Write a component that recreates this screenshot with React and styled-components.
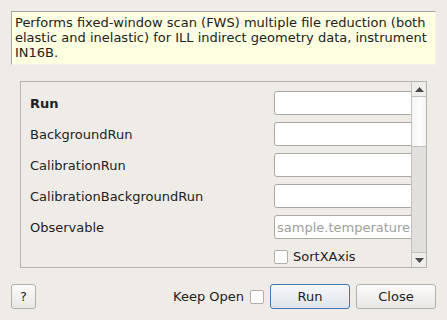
import React from 'react'
import styled, { createGlobalStyle } from 'styled-components'

const GlobalStyle = createGlobalStyle`
  html, body {
    margin: 0;
    padding: 0;
    background: #efebe7;
  }
  body {
    font-family: "DejaVu Sans", "Liberation Sans", sans-serif;
    font-size: 13px;
    color: #1e1e1e;
  }
`;

const Dialog = styled.div`
  width: 447px;
  height: 320px;
  box-sizing: border-box;
  padding: 11px 11px 0 11px;
  display: flex;
  flex-direction: column;
  overflow: hidden;
`;

const Description = styled.div`
  box-sizing: border-box;
  height: 54px;
  background: #ffffe1;
  border-top: 1px solid #a7a59f;
  border-left: 1px solid #a7a59f;
  border-right: 1px solid #f4f2ef;
  border-bottom: 1px solid #f4f2ef;
  padding: 3px 3px;
  line-height: 15px;
  color: #222;
`;

const Panel = styled.div`
  box-sizing: border-box;
  margin: 16px 9px 0 9px;
  height: 187px;
  border: 1px solid #b6b3ae;
  display: flex;
`;

const Rows = styled.div`
  flex: 1;
  overflow: hidden;
  padding: 9px 0 0 9px;
  display: flex;
  flex-direction: column;
  gap: 7px;
`;

const Row = styled.div`
  display: grid;
  grid-template-columns: 244px 160px;
  align-items: center;
  height: 24px;
  flex-shrink: 0;
`;

const Label = styled.span`
  font-weight: ${p => (p.$bold ? 700 : 400)};
  color: #222;
  white-space: nowrap;
`;

const Input = styled.div`
  box-sizing: border-box;
  height: 24px;
  background: #fff;
  border: 1px solid #aaa8a4;
  border-radius: 3px;
  padding: 0 2px;
  display: flex;
  align-items: center;
  color: #a0a0a0;
  white-space: nowrap;
`;

const CheckLine = styled.label`
  display: flex;
  align-items: center;
  gap: 5px;
  color: #222;
  margin-top: -3px;
`;

const Box = styled.span`
  box-sizing: border-box;
  display: inline-block;
  width: 14px;
  height: 14px;
  background: #fff;
  border: 1px solid #b0aea9;
  border-radius: 2px;
`;

const Scrollbar = styled.div`
  box-sizing: border-box;
  width: 15px;
  border-left: 1px solid #c4c1bc;
  display: flex;
  flex-direction: column;
`;

const ArrowButton = styled.div`
  height: 14px;
  display: flex;
  align-items: center;
  justify-content: center;
  background: #f0eeeb;
  border-top: ${p => (p.$down ? '1px solid #c4c1bc' : 'none')};
  border-bottom: ${p => (p.$down ? 'none' : '1px solid #c4c1bc')};
`;

const Thumb = styled.div`
  height: 49px;
  background: linear-gradient(to right, #f4f4f4, #fdfdfd 60%, #f2f2f2);
  border-bottom: 1px solid #c4c1bc;
`;

const Track = styled.div`
  flex: 1;
  background: #e2e0dc;
`;

const Footer = styled.div`
  margin-top: 16px;
  display: flex;
  align-items: center;
  gap: 6px;
`;

const Button = styled.button`
  box-sizing: border-box;
  height: 25px;
  width: ${p => p.$w || 80}px;
  padding: 0;
  font-family: inherit;
  font-size: 13px;
  color: #222;
  border-radius: 3px;
  border: 1px solid ${p => (p.$primary ? '#3f7bb0' : '#b3b0ab')};
  background: ${p =>
    p.$primary
      ? 'linear-gradient(#f6f7f9, #dfe4ea)'
      : 'linear-gradient(#fbfbfa, #e9e7e4)'};
`;

const Spacer = styled.div`
  flex: 1;
`;

const KeepOpen = styled.span`
  color: #222;
`;

const Arrow = ({ down }) => (
  <svg width="9" height="5" viewBox="0 0 9 5">
    <path d={down ? 'M0 0 H9 L4.5 5 Z' : 'M0 5 H9 L4.5 0 Z'} fill="#4a4a4a" />
  </svg>
);

const fields = [
  { label: 'Run', bold: true },
  { label: 'BackgroundRun' },
  { label: 'CalibrationRun' },
  { label: 'CalibrationBackgroundRun' },
  { label: 'Observable', placeholder: 'sample.temperature' },
];

const App = () => {
  return (
    <>
      <GlobalStyle />
      <Dialog>
        <Description>
          Performs fixed-window scan (FWS) multiple file reduction (both elastic and inelastic) for ILL indirect geometry data, instrument IN16B.
        </Description>
        <Panel>
          <Rows>
            {fields.map(f => (
              <Row key={f.label}>
                <Label $bold={f.bold}>{f.label}</Label>
                <Input>{f.placeholder}</Input>
              </Row>
            ))}
            <Row>
              <span />
              <CheckLine><Box />SortXAxis</CheckLine>
            </Row>
          </Rows>
          <Scrollbar>
            <ArrowButton><Arrow /></ArrowButton>
            <Thumb />
            <Track />
            <ArrowButton $down><Arrow down /></ArrowButton>
          </Scrollbar>
        </Panel>
        <Footer>
          <Button $w={25}>?</Button>
          <Spacer />
          <KeepOpen>Keep Open</KeepOpen>
          <Box />
          <Button $primary>Run</Button>
          <Button>Close</Button>
        </Footer>
      </Dialog>
    </>
  )
};

export default App
